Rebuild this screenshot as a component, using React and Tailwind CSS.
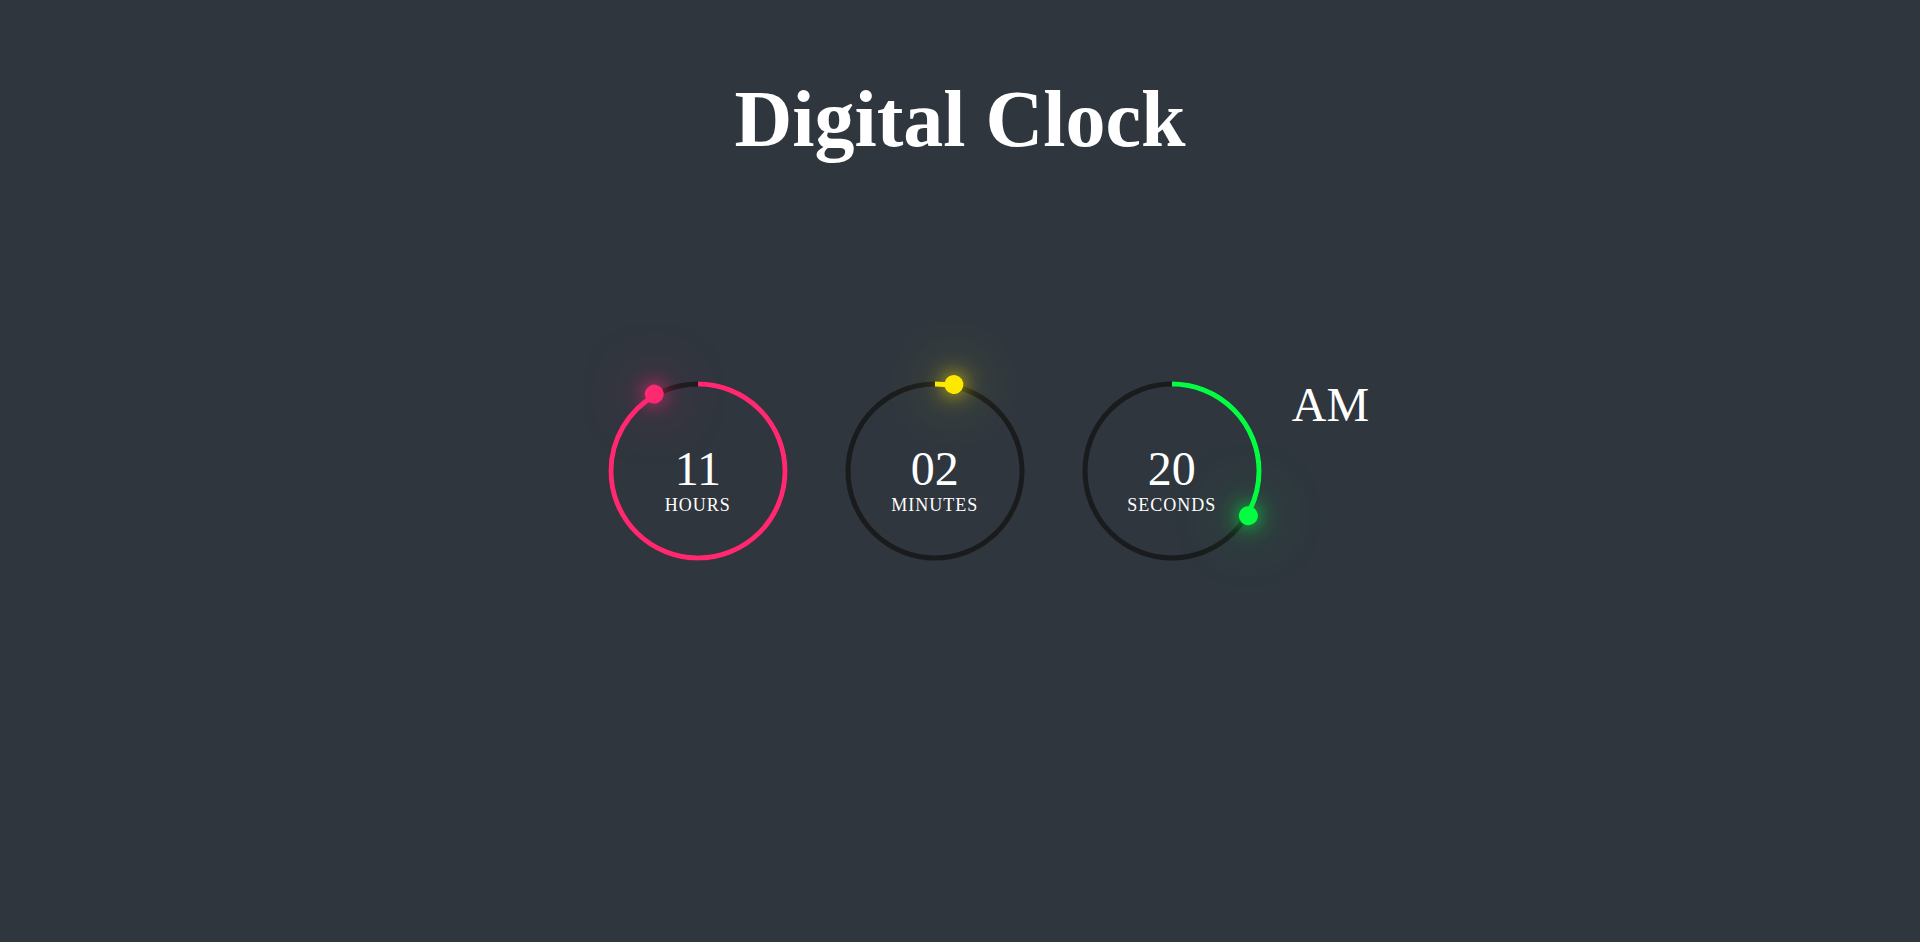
import React from 'react';

const R = 87;
const CIRC = 2 * Math.PI * R;

const units = [
  { value: '11', label: 'Hours', frac: 11 / 12, color: '#ff2972' },
  { value: '02', label: 'Minutes', frac: 2 / 60, color: '#fee800' },
  { value: '20', label: 'Seconds', frac: 20 / 60, color: '#04fc43' },
];

function Ring({ value, label, frac, color }) {
  return (
    <div className="relative w-[190px] h-[190px] shrink-0">
      {/* anel de fundo + arco de progresso */}
      <svg className="absolute inset-0 -rotate-90" width="190" height="190" viewBox="0 0 190 190">
        <circle cx="95" cy="95" r={R} fill="none" stroke="#1a1b1d" strokeWidth="5" />
        <circle
          cx="95"
          cy="95"
          r={R}
          fill="none"
          stroke={color}
          strokeWidth="5"
          strokeDasharray={CIRC}
          strokeDashoffset={CIRC * (1 - frac)}
        />
      </svg>

      {/* ponto que marca o tempo */}
      <div className="absolute inset-0 z-10" style={{ transform: `rotate(${frac * 360}deg)` }}>
        <div
          className="absolute top-[-3px] left-1/2 -ml-[9.5px] w-[19px] h-[19px] rounded-full"
          style={{ background: color, boxShadow: `0 0 20px ${color}, 0 0 60px ${color}` }}
        />
      </div>

      <div className="relative flex flex-col items-center pt-[70px] text-white">
        <span className="text-[48px] leading-[46px]">{value}</span>
        <span className="mt-[4px] text-[18px] leading-[18px] uppercase tracking-[1px]">{label}</span>
      </div>
    </div>
  );
}

export default function App() {
  return (
    <div className="min-h-screen bg-[#2f363e] text-white font-['Liberation_Serif','Times_New_Roman',serif]">
      <h1 className="pt-[79px] text-center text-[80px] leading-[80px] font-bold">Digital Clock</h1>

      <div className="mt-[217px] flex justify-center items-start pl-[52px]">
        <div className="flex gap-[47px]">
          {units.map((u) => (
            <Ring key={u.label} {...u} />
          ))}
        </div>
        <span className="ml-[25px] mt-[5px] text-[48px] leading-[48px]">AM</span>
      </div>
    </div>
  );
}
